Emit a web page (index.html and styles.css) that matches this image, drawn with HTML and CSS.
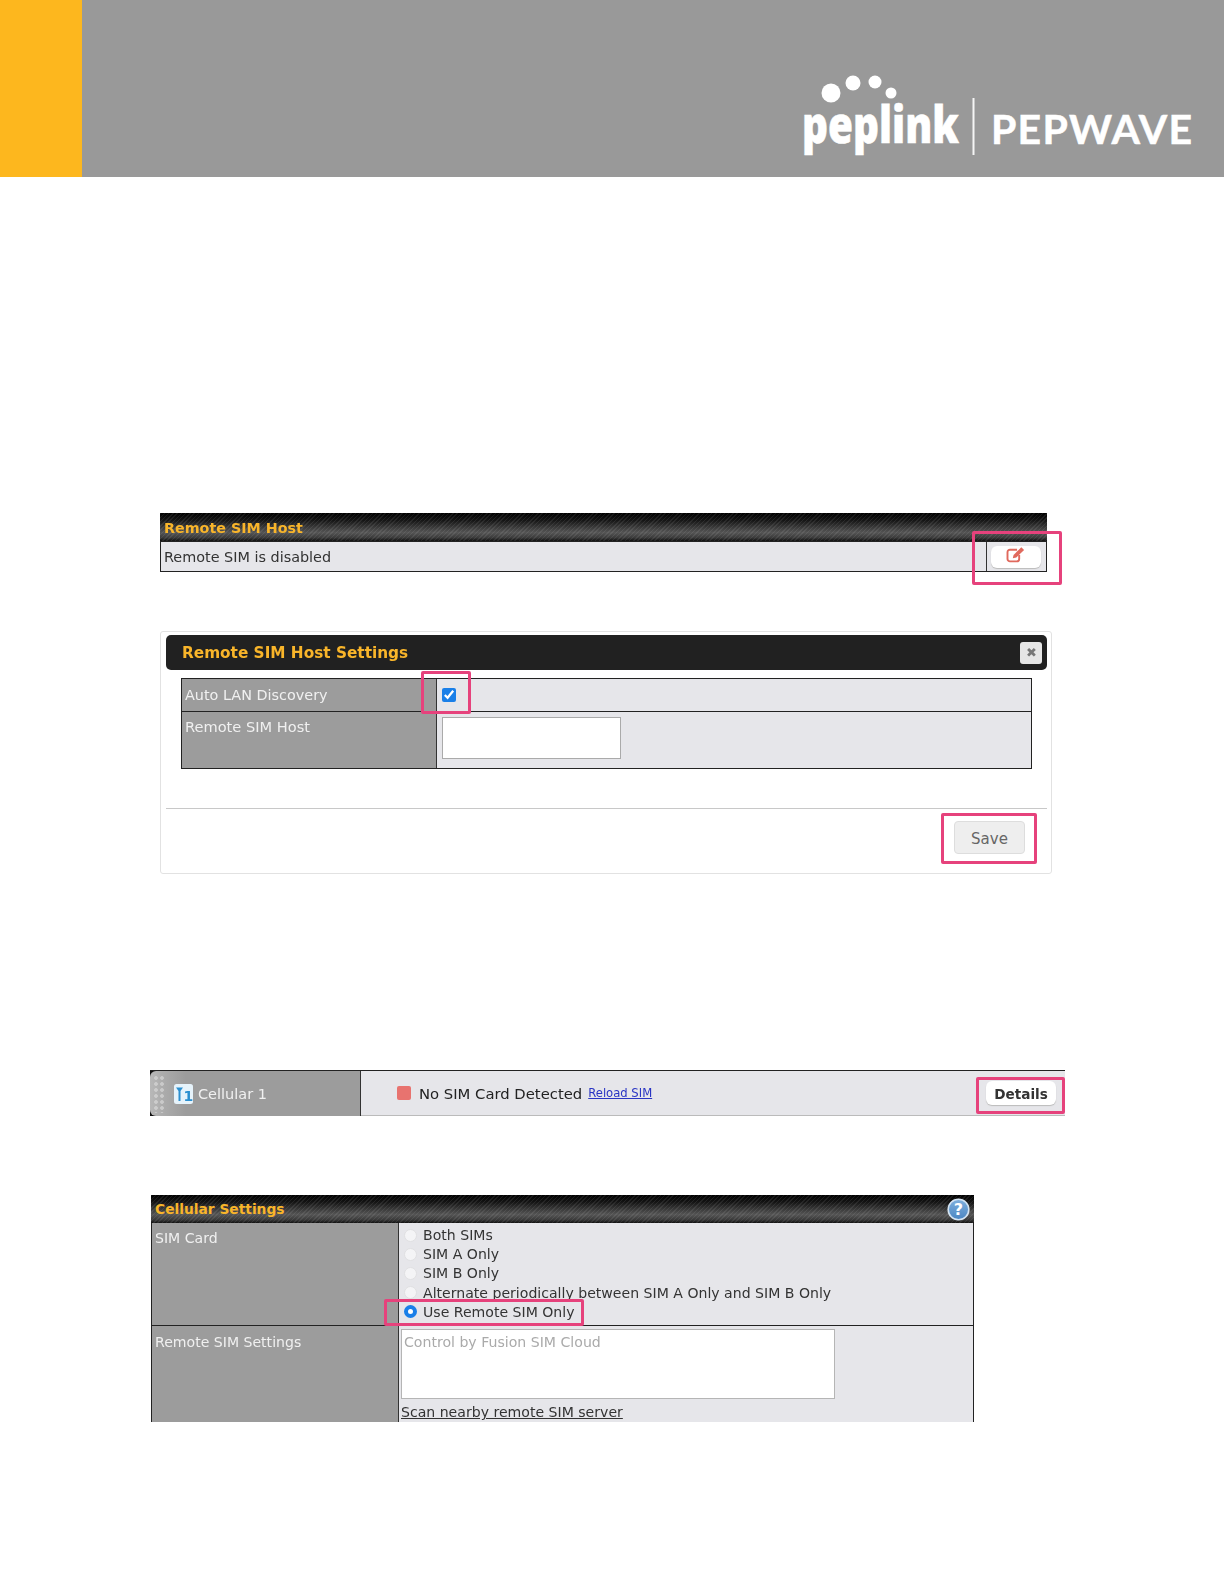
FILE: index.html
```html
<!DOCTYPE html>
<html lang="en">
<head>
<meta charset="utf-8">
<title>Remote SIM Host</title>
<link rel="stylesheet" href="styles.css">
</head>
<body>
<div class="page">
  <header class="banner">
    <div class="accent"></div>
    <svg class="logo" width="404" height="90" viewBox="0 0 404 90" aria-label="peplink PEPWAVE">
      <g fill="#fff">
        <circle cx="35" cy="23" r="9.5"/>
        <circle cx="57" cy="13" r="7.5"/>
        <circle cx="79" cy="12" r="6.5"/>
        <circle cx="95" cy="23" r="5.5"/>
        <text class="logo-peplink" x="6" y="73" textLength="157" lengthAdjust="spacingAndGlyphs">peplink</text>
        <rect x="176.500" y="28" width="2" height="57" opacity=".9"/>
        <text class="logo-pepwave" x="195" y="74" textLength="201" lengthAdjust="spacing">PEPWAVE</text>
      </g>
    </svg>
  </header>

  <section class="host shot">
    <div class="stripe-head host-head"><span>Remote SIM Host</span></div>
    <div class="host-row">
      <div class="host-status">Remote SIM is disabled</div>
      <div class="host-action">
        <button class="btn-white btn-edit" type="button" aria-label="Edit">
          <svg width="22" height="17" viewBox="0 0 20 16"><path d="M13 8.500v3.700a2.300 2.300 0 0 1-2.300 2.300H4.300A2.300 2.300 0 0 1 2 12.200V5.800a2.300 2.300 0 0 1 2.300-2.300H11" fill="none" stroke="#e0695d" stroke-width="1.800"/><path d="M7 11.500l.7-3L15 1.200l2.600 2.600-7.300 7.100z" fill="#e0695d"/></svg>
        </button>
      </div>
    </div>
    <div class="mark mark-edit"></div>
  </section>

  <section class="dialog shot">
    <div class="dialog-head">
      <span>Remote SIM Host Settings</span>
      <button class="dialog-close" type="button" aria-label="Close">✖</button>
    </div>
    <div class="form-table">
      <div class="label dlg-row1">Auto LAN Discovery</div>
      <div class="value dlg-row1"><input class="check" type="checkbox" checked></div>
      <div class="label dlg-row2">Remote SIM Host</div>
      <div class="value dlg-row2"><input class="host-input" type="text"></div>
    </div>
    <div class="dialog-foot">
      <button class="btn-save" type="button">Save</button>
    </div>
    <div class="mark mark-check"></div>
    <div class="mark mark-save"></div>
  </section>

  <section class="cell-row shot">
    <div class="cell-name">
      <span class="grip"></span>
      <svg class="t1" width="19" height="20" viewBox="0 0 19 20"><rect width="19" height="20" rx="2.500" fill="#e6f3fb"/><path d="M2 3.500h7L6.500 7v10h-2V7z" fill="#2a8fd0"/><text class="t1-num" x="9.500" y="16.500">1</text></svg>
      <span class="cell-title">Cellular 1</span>
    </div>
    <div class="cell-status">
      <span class="led"></span>
      <span class="cell-msg">No SIM Card Detected</span>
      <a class="reload" href="#">Reload SIM</a>
      <button class="btn-white btn-details" type="button">Details</button>
    </div>
    <div class="mark mark-details"></div>
  </section>

  <section class="settings shot">
    <div class="stripe-head settings-head">
      <span>Cellular Settings</span>
      <svg class="help" width="23" height="23" viewBox="0 0 23 23"><defs><linearGradient id="helpfill" x1="0" y1="0" x2="0" y2="1"><stop offset="0" stop-color="#7fb0dd"/><stop offset="1" stop-color="#4a85c2"/></linearGradient></defs><circle cx="11.500" cy="11.500" r="10.300" fill="url(#helpfill)" stroke="#d5e4f2" stroke-width="1.600"/><text class="help-q" x="11.500" y="17">?</text></svg>
    </div>
    <div class="settings-grid">
      <div class="label sim-label">SIM Card</div>
      <div class="value sim-options">
        <label class="opt"><input type="radio" name="sim" class="radio"><span>Both SIMs</span></label>
        <label class="opt"><input type="radio" name="sim" class="radio"><span>SIM A Only</span></label>
        <label class="opt"><input type="radio" name="sim" class="radio"><span>SIM B Only</span></label>
        <label class="opt"><input type="radio" name="sim" class="radio"><span>Alternate periodically between SIM A Only and SIM B Only</span></label>
        <label class="opt"><input type="radio" name="sim" class="radio" checked><span>Use Remote SIM Only</span></label>
      </div>
      <div class="label remote-label">Remote SIM Settings</div>
      <div class="value remote-value">
        <textarea class="remote-area" placeholder="Control by Fusion SIM Cloud"></textarea>
        <a class="scan" href="#">Scan nearby remote SIM server</a>
      </div>
    </div>
    <div class="mark mark-radio"></div>
  </section>
</div>
</body>
</html>
```
FILE: styles.css
```css
* { box-sizing: border-box; }
html, body { margin: 0; padding: 0; background: #fff; }
body { font-family: "DejaVu Sans", sans-serif; font-size: 14px; color: #333; }
.page { width: 1224px; height: 1584px; overflow: hidden; }
.shot { filter: blur(.4px); }

/* banner */
.banner { height: 177px; background: #999; display: flex; justify-content: space-between; }
.accent { width: 82px; background: #fdb71e; }
.logo { margin: 70px 24px 0 0; }
.logo-peplink { font-family: "Open Sans", sans-serif; font-weight: 800; font-size: 52px; stroke: #fff; stroke-width: .6px; }
.logo-pepwave { font-family: "Lato", sans-serif; font-weight: 700; font-size: 41px; stroke: #fff; stroke-width: .5px; }

/* shared */
.stripe-head {
  display: flex; align-items: center; justify-content: space-between;
  font-weight: 700; color: #f9b52a; font-size: 14px;
  background:
    repeating-linear-gradient(135deg, rgba(255,255,255,.08) 0 1px, transparent 1px 3px),
    linear-gradient(180deg, #000 0, #141414 25%, #555 70%, #3a3a3a 88%, #111 100%);
}
.label { background: #9c9c9c; color: #f0f0f0; border-right: 1px solid #333; padding: 9px 3px 0; }
.value { background: #e6e6ea; }
.mark { position: absolute; border: 3px solid #e6427c; border-radius: 2px; pointer-events: none; }
.btn-white {
  background: #fff; border: 0; border-radius: 6px; padding: 0;
  box-shadow: 0 1px 1px #bbb;
}

/* Remote SIM Host */
.host { position: relative; margin: 336px 0 0 160px; width: 887px; }
.host-head { height: 28px; padding: 2px 4px 0; font-size: 14.300px; }
.host-row { display: flex; height: 31px; background: #e6e6ea; border: 1px solid #222; }
.host-status { flex: 1; padding: 7px 3px 0; font-size: 14.400px; }
.host-action { width: 60px; border-left: 1px solid #333; padding: 4px 0 0 4px; }
.btn-edit { display: flex; align-items: flex-start; justify-content: center; width: 50px; height: 22px; }
.mark-edit { left: 812px; top: 18px; width: 90px; height: 54px; }

/* dialog */
.dialog {
  position: relative; margin: 59px 0 0 160px; width: 892px; height: 243px;
  border: 1px solid #e2e2e2; border-radius: 3px; padding: 3px 4px 0 5px;
}
.dialog-head {
  display: flex; align-items: center; justify-content: space-between;
  height: 35px; padding: 1px 5px 0 16px; background: #212121; border-radius: 5px;
  color: #f9b52a; font-weight: 700; font-size: 15.300px;
}
.dialog-close {
  width: 22px; height: 22px; border: 0; border-radius: 3px; padding: 0;
  background: #e6e6e6; color: #777; font-size: 13px; line-height: 22px;
}
.form-table {
  display: grid; grid-template-columns: 255px 1fr; grid-template-rows: 33px 56px;
  width: 851px; height: 91px; margin: 8px 0 39px 15px; border: 1px solid #222;
  font-size: 14.400px;
}
.dlg-row1 { border-bottom: 1px solid #222; }
.dlg-row1.label { padding-top: 8px; }
.dlg-row2.label { padding-top: 6px; font-size: 14.600px; }
.dlg-row1.value { display: flex; align-items: center; padding-left: 5px; }
.dlg-row2.value { padding: 5px 0 0 5px; }
.check { width: 14px; height: 14px; margin: 0; accent-color: #1a7fe8; }
.host-input { display: block; width: 179px; height: 42px; background: #fff; border: 1px solid #aaa; padding: 0; }
.dialog-foot { display: flex; justify-content: flex-end; border-top: 1.5px solid #c8c8c8; padding: 12px 22px 0 0; }
.btn-save {
  width: 71px; height: 33px; background: #eee; border: 1px solid #ddd; border-radius: 4px;
  color: #666; font-family: "DejaVu Sans", sans-serif; font-size: 15px; padding: 2px 0 0;
}
.mark-check { left: 260px; top: 39px; width: 50px; height: 43px; }
.mark-save { left: 780px; top: 181px; width: 96px; height: 51px; }

/* cellular row */
.cell-row {
  position: relative; display: flex; margin: 196px 0 0 150px; width: 915px; height: 46px;
  border-top: 1.5px solid #222; background: #111;
}
.cell-name {
  display: flex; align-items: center; width: 211px; height: 100%;
  background: linear-gradient(90deg, #b8b8b8 0, #ababab 14px, #9c9c9c 36px);
  border-right: 1px solid #333; border-radius: 6px 0 0 6px;
  color: #f0f0f0; font-size: 14.500px;
}
.grip {
  flex: none; width: 12px; height: 38px; margin: 0 9px 0 3px; opacity: .6;
  background: radial-gradient(circle, #ddd 0 1.500px, transparent 2.200px) 0 0 / 6px 6px;
}
.t1 { flex: none; margin-right: 5px; }
.t1-num { font-family: "DejaVu Sans", sans-serif; font-weight: 700; font-size: 14px; fill: #2a8fd0; }
.cell-status {
  flex: 1; display: flex; align-items: center; background: #e6e6ea;
  border-bottom: 1px solid #bbb; padding: 0 9px 0 36px;
}
.led { width: 14px; height: 14px; background: #e8736f; border-radius: 2px; margin-right: 8px; }
.cell-msg { color: #222; font-size: 14.800px; }
.reload { margin-left: 6px; color: #2a35c4; font-size: 11.600px; }
.btn-details {
  margin-left: auto; width: 70px; height: 24px; color: #333; padding-top: 2px;
  font-family: "DejaVu Sans", sans-serif; font-weight: 700; font-size: 13.600px;
}
.mark-details { left: 826px; top: 6px; width: 89px; height: 37px; }

/* cellular settings */
.settings { position: relative; margin: 79px 0 0 151px; width: 823px; height: 227px; overflow: hidden; }
.settings-head { height: 28px; padding: 0 3px 0 4px; font-size: 13.800px; }
.help { margin-right: 1px; }
.help-q { font-family: "DejaVu Sans", sans-serif; font-weight: 700; font-size: 16px; fill: #fff; text-anchor: middle; }
.settings-grid {
  display: grid; grid-template-columns: 247px 1fr; grid-template-rows: 103px 1fr;
  height: 199px; border-left: 1px solid #222; border-right: 1px solid #222;
  font-size: 14.080px;
}
.sim-label, .sim-options { border-bottom: 1px solid #222; }
.sim-label { padding-top: 7px; }
.remote-label { padding-top: 8px; }
.sim-options { padding: 2.500px 0 0 5px; }
.opt { display: flex; align-items: center; height: 19.200px; white-space: nowrap; }
.radio {
  appearance: none; flex: none; width: 13px; height: 13px; margin: 0 6px 0 0;
  border-radius: 50%; background: #f4f4f6; border: 1px solid #e0e0e2;
}
.radio:checked { background: #fff; border: 4px solid #1a7fe8; }
.remote-value { padding: 3px 0 0 2px; }
.remote-area {
  display: block; width: 434px; height: 70px; resize: none; padding: 4px 2px; margin: 0;
  background: #fff; border: 1px solid #b5b5b5; font-family: "DejaVu Sans", sans-serif; font-size: 14.100px; outline: 0;
}
.remote-area::placeholder { color: #aaa; opacity: 1; }
.scan { display: block; margin-top: 5px; color: #333; }
.mark-radio { left: 233px; top: 104px; width: 200px; height: 27px; }
```
